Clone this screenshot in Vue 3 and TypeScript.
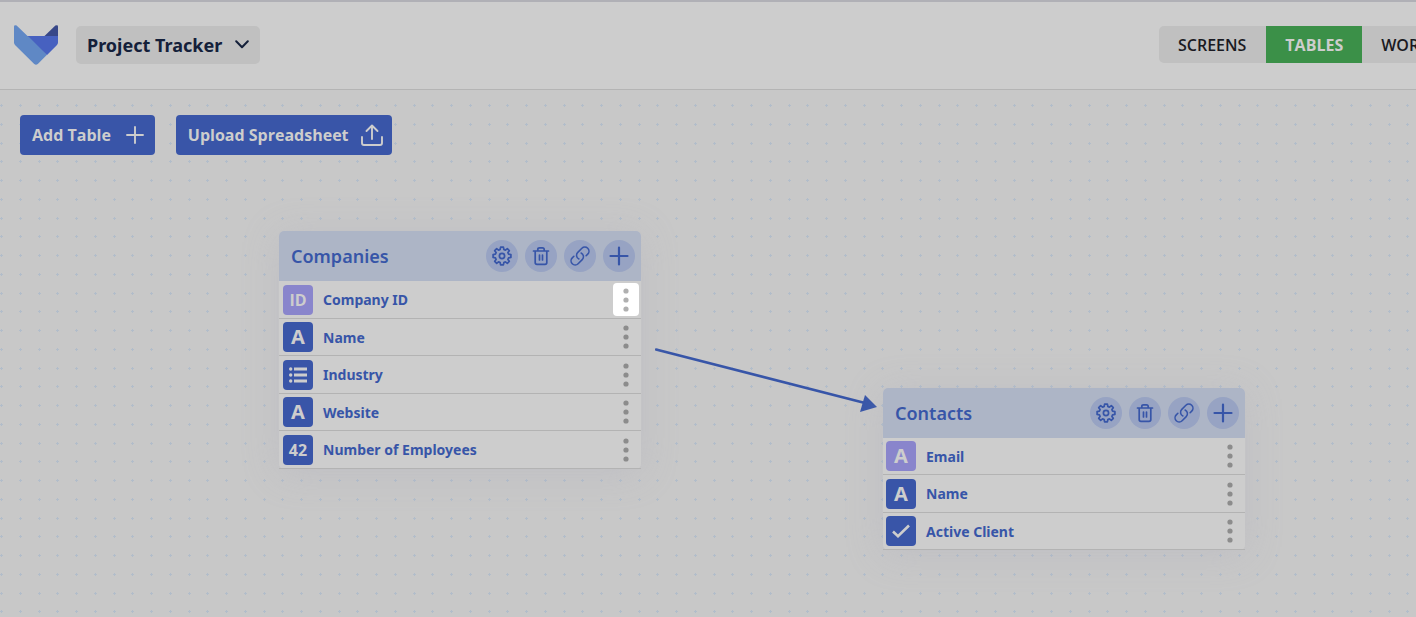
<script setup lang="ts">
import { ref } from 'vue'

type Kind = 'id' | 'text' | 'list' | 'number' | 'check'
interface Field { name: string; kind: Kind; key?: boolean; active?: boolean }
interface TableCard { id: string; title: string; fields: Field[] }

const glyphs: Record<string, string> = { id: 'ID', text: 'A', number: '42' }
const tabs = ['Screens', 'Tables', 'Workflows']
const current = ref('Tables')

const tables: TableCard[] = [
  {
    id: 'companies',
    title: 'Companies',
    fields: [
      { name: 'Company ID', kind: 'id', key: true, active: true },
      { name: 'Name', kind: 'text' },
      { name: 'Industry', kind: 'list' },
      { name: 'Website', kind: 'text' },
      { name: 'Number of Employees', kind: 'number' },
    ],
  },
  {
    id: 'contacts',
    title: 'Contacts',
    fields: [
      { name: 'Email', kind: 'text', key: true },
      { name: 'Name', kind: 'text' },
      { name: 'Active Client', kind: 'check' },
    ],
  },
]
</script>

<template>
  <div class="app">
    <header class="topbar">
      <svg class="logo" viewBox="0 0 44 40" aria-hidden="true">
        <path fill="#5f88c5" d="M0 1.6Q0 .2 1.3 .2L2.6 .6L13.5 11H16L33 29.8L23.8 39Q22 40.6 20.2 39L1 20Q0 19 0 17.6Z" />
        <path fill="#4761c0" d="M13.5 11H44V17.6Q44 19 43 20L33 30L15 12Z" />
        <path fill="#374788" d="M30.5 11L41.4 .6Q44 -.6 44 1.6V11Z" />
      </svg>
      <button class="project" type="button">
        Project Tracker
        <svg width="14" height="9" viewBox="0 0 14 9" aria-hidden="true"><path d="M1.2 1.2L7 7.2L12.8 1.2" fill="none" stroke="currentColor" stroke-width="2" stroke-linecap="round" stroke-linejoin="round" /></svg>
      </button>
      <nav class="tabs">
        <button v-for="t in tabs" :key="t" type="button" class="tab" :class="{ on: t === current }" @click="current = t">{{ t }}</button>
      </nav>
    </header>

    <main class="canvas">
      <svg class="grid" aria-hidden="true">
        <defs>
          <pattern id="dots" width="75" height="75" patternUnits="userSpaceOnUse">
            <template v-for="y in [15, 34, 53, 71]" :key="y">
              <path v-for="x in [1, 20, 39, 57]" :key="x" :transform="`translate(${x} ${y})`" d="M0 -1h1v1h1v1h-1v1h-1v-1h-1v-1h1z" fill="#b2bdca" />
            </template>
          </pattern>
        </defs>
        <rect width="100%" height="100%" fill="url(#dots)" />
      </svg>

      <div class="actions">
        <button class="action" type="button">
          Add Table
          <svg width="18" height="18" viewBox="0 0 18 18" aria-hidden="true"><path d="M9 1V17M1 9H17" fill="none" stroke="currentColor" stroke-width="1.9" stroke-linecap="round" /></svg>
        </button>
        <button class="action upload" type="button">
          Upload Spreadsheet
          <svg width="22" height="22" viewBox="0 0 22 22" aria-hidden="true"><path d="M1 13V19Q1 21 3 21H19Q21 21 21 19V13M11 15V1.5M5.5 7L11 1.5L16.5 7" fill="none" stroke="currentColor" stroke-width="1.9" stroke-linecap="round" stroke-linejoin="round" /></svg>
        </button>
      </div>

      <svg class="arrow" width="222" height="66" viewBox="0 0 222 66" aria-hidden="true">
        <path d="M1 2.5L210 56" stroke="#3755a8" stroke-width="2.5" stroke-linecap="round" />
        <path d="M210 48L222 60L205 65Z" fill="#3755a8" />
      </svg>

      <section v-for="table in tables" :key="table.id" class="card" :class="table.id">
        <div class="card-head">
          <h2>{{ table.title }}</h2>
          <button type="button" class="tool" aria-label="Settings">
            <svg width="22" height="22" viewBox="-11 -11 22 22">
              <path d="M-1.4 -8.9H1.4L1.8 -6.6L3.4 -5.9L5.3 -7.3L7.3 -5.3L5.9 -3.4L6.6 -1.8L8.9 -1.4V1.4L6.6 1.8L5.9 3.4L7.3 5.3L5.3 7.3L3.4 5.9L1.8 6.6L1.4 8.9H-1.4L-1.8 6.6L-3.4 5.9L-5.3 7.3L-7.3 5.3L-5.9 3.4L-6.6 1.8L-8.9 1.4V-1.4L-6.6 -1.8L-5.9 -3.4L-7.3 -5.3L-5.3 -7.3L-3.4 -5.9L-1.8 -6.6Z" />
              <circle r="2.6" />
            </svg>
          </button>
          <button type="button" class="tool" aria-label="Delete">
            <svg width="22" height="22" viewBox="0 0 22 22"><path d="M3.5 6H18.500M5.200 6V17.500Q5.200 19.300 7 19.300H15Q16.800 19.300 16.800 17.500V6M7.800 6V4.500Q7.800 2.800 9.500 2.800H12.500Q14.200 2.800 14.200 4.500V6M9.500 10V15M12.500 10V15" /></svg>
          </button>
          <button type="button" class="tool" aria-label="Link">
            <svg width="22" height="22" viewBox="0 0 24 24"><path d="M13.19 8.688a4.5 4.5 0 0 1 1.242 7.244l-4.5 4.5a4.5 4.5 0 0 1-6.364-6.364l1.757-1.757m13.35-.622 1.757-1.757a4.5 4.5 0 0 0-6.364-6.364l-4.5 4.5a4.5 4.5 0 0 0 1.242 7.244" /></svg>
          </button>
          <button type="button" class="tool add" aria-label="Add field">
            <svg width="22" height="22" viewBox="0 0 22 22"><path d="M11 2.5V19.5M2.5 11H19.5" /></svg>
          </button>
        </div>
        <ul class="fields">
          <li v-for="f in table.fields" :key="f.name" class="field">
            <span class="badge" :class="[f.kind, { key: f.key }]">
              <svg v-if="f.kind === 'list'" width="18" height="16" viewBox="0 0 18 16" aria-hidden="true">
                <path d="M5 .5H18V3.5H5ZM5 6.5H18V9.5H5ZM5 12.5H18V15.5H5Z" fill="currentColor" />
                <circle cx="1.7" cy="2" r="1.7" fill="currentColor" /><circle cx="1.7" cy="8" r="1.7" fill="currentColor" /><circle cx="1.7" cy="14" r="1.7" fill="currentColor" />
              </svg>
              <svg v-else-if="f.kind === 'check'" width="18" height="14" viewBox="0 0 18 14" aria-hidden="true"><path d="M1 7.5L6 12.2L17 1.5" fill="none" stroke="currentColor" stroke-width="2.6" /></svg>
              <template v-else>{{ glyphs[f.kind] }}</template>
            </span>
            <span class="name">{{ f.name }}</span>
            <button type="button" class="more" :class="{ active: f.active }" :aria-label="`Options for ${f.name}`">
              <svg width="6" height="24" viewBox="0 0 6 24"><circle cx="3" cy="3" r="2.6" /><circle cx="3" cy="12" r="2.6" /><circle cx="3" cy="21" r="2.6" /></svg>
            </button>
          </li>
        </ul>
      </section>
    </main>
  </div>
</template>

<style>
body { margin: 0; background: #c8c8c8; }
</style>

<style scoped>
.app {
  display: flex;
  flex-direction: column;
  min-height: 100vh;
  overflow: hidden;
  font-family: "Noto Sans", "Open Sans", sans-serif;
}
button { border: 0; padding: 0; font: inherit; color: inherit; background: none; cursor: pointer; }
.topbar {
  display: flex;
  align-items: center;
  box-sizing: border-box;
  height: 90px;
  padding: 0 0 2px 14px;
  background: #cdcdcd;
  border-top: 2px solid #b0b0b6;
  border-bottom: 1px solid #b4b4b4;
}
.logo { width: 44px; height: 40px; margin-right: 18px; }
.project {
  display: flex;
  align-items: center;
  gap: 13px;
  height: 38px;
  padding: 0 11px;
  border-radius: 5px;
  background: #c0c0c0;
  color: #14203a;
  font-size: 18px;
  font-weight: 700;
  white-space: nowrap;
}
.tabs {
  display: flex;
  flex: 0 0 257px;
  margin-left: auto;
  overflow: hidden;
  border-radius: 5px 0 0 5px;
  background: #c0c0c0;
}
.tab {
  flex: none;
  height: 37px;
  padding: 0 19px;
  color: #1a1a22;
  font-family: "Open Sans", "Noto Sans", sans-serif;
  font-size: 16px;
  font-weight: 600;
  text-transform: uppercase;
}
.tab:first-child { padding-right: 20px; }
.tab.on { background: #3b9048; color: #cdcdcd; font-weight: 700; }
.canvas { position: relative; flex: 1; }
.grid { position: absolute; inset: 0; width: 100%; height: 100%; }
.actions { position: relative; display: flex; gap: 21px; padding: 25px 20px; }
.action {
  display: flex;
  align-items: center;
  gap: 15px;
  height: 40px;
  padding: 0 11px 0 12px;
  border-radius: 4px;
  background: #3955a8;
  color: #cdcdcd;
  font-family: "Open Sans", "Noto Sans", sans-serif;
  font-size: 16px;
  font-weight: 700;
  white-space: nowrap;
}
.upload { gap: 12px; padding: 0 9px 0 12px; }
.arrow { position: absolute; left: 655px; top: 257px; }
.card {
  position: absolute;
  width: 362px;
  border-radius: 5px;
  background: #cdcdcd;
  color: #3755a8;
  box-shadow: 0 4px 36px #a8a8b84d;
}
.companies { left: 279px; top: 141px; }
.contacts { left: 883px; top: 298px; }
.card-head {
  display: flex;
  align-items: center;
  gap: 7px;
  height: 50px;
  padding: 0 6px 0 12px;
  border-radius: 5px 5px 0 0;
  background: #adb5c6;
}
h2 { flex: 1; margin: 0; font-size: 18px; font-weight: 600; }
.tool {
  display: grid;
  place-items: center;
  width: 32px;
  height: 32px;
  border-radius: 50%;
  background: #97a3c3;
}
.tool svg { fill: none; stroke: currentColor; stroke-width: 1.7; stroke-linecap: round; stroke-linejoin: round; }
.tool.add svg { stroke-width: 2.2; }
.fields { display: grid; grid-auto-rows: 38px 37px; margin: 0; padding: 0; list-style: none; }
.contacts .fields { grid-auto-rows: 37px 38px; }
.field {
  display: flex;
  align-items: center;
  gap: 10px;
  padding: 0 2px 0 4px;
  border-bottom: 1px solid #b3b3b3;
}
.contacts .field { padding-left: 3px; }
.badge {
  display: grid;
  place-items: center;
  width: 30px;
  height: 30px;
  border-radius: 4px;
  background: #3955a8;
  color: #cdcdcd;
  font-size: 20px;
  font-weight: 700;
  line-height: 30px;
}
.badge.key { background: #8985cc; }
.badge.id, .badge.number { font-family: "Open Sans", "Noto Sans", sans-serif; font-size: 16px; }
.name { flex: 1; font-size: 14px; font-weight: 700; }
.more {
  display: grid;
  place-items: center;
  width: 26px;
  height: 33px;
  border-radius: 4px;
}
.more svg { fill: #8c8c8c; }
.more.active { background: #fff; }
.more.active svg { fill: #b0b0b0; }
</style>
